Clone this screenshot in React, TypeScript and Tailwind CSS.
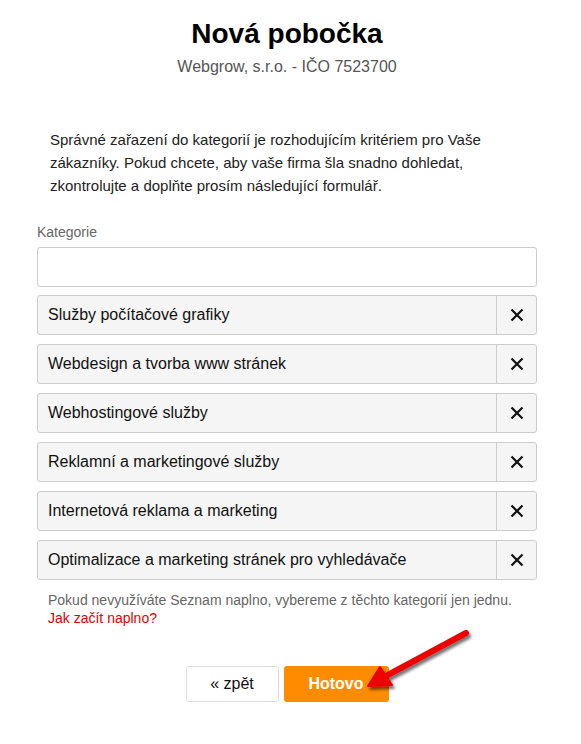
const categories = [
  "Služby počítačové grafiky",
  "Webdesign a tvorba www stránek",
  "Webhostingové služby",
  "Reklamní a marketingové služby",
  "Internetová reklama a marketing",
  "Optimalizace a marketing stránek pro vyhledávače",
];

function CloseIcon() {
  return (
    <svg width="14" height="14" viewBox="0 0 14 14" fill="none">
      <path d="M1.5 1.5 L12.5 12.5 M12.5 1.5 L1.5 12.5" stroke="#111" strokeWidth="2.2" />
    </svg>
  );
}

export default function App() {
  return (
    <div className="relative min-h-[744px] bg-white font-['Liberation_Sans',Arial,sans-serif] text-[#222]">
      <div className="ml-[37px] flex w-[500px] flex-col pt-[17px]">
        {/* Header */}
        <h1 className="text-center text-[28px] font-bold leading-[34px] text-black">Nová pobočka</h1>
        <p className="mt-[6px] text-center text-[16px] leading-[20px] text-[#555]">
          Webgrow, s.r.o. - IČO 7523700
        </p>

        {/* Intro */}
        <p className="mt-[51px] w-[470px] pl-[13px] pr-[10px] text-[15px] leading-[23px] text-[#222]">
          Správné zařazení do kategorií je rozhodujícím kritériem pro Vaše zákazníky. Pokud chcete,
          aby vaše firma šla snadno dohledat, zkontrolujte a doplňte prosím následující formulář.
        </p>

        {/* Category picker */}
        <label className="mt-[26px] text-[14px] leading-[18px] text-[#666]">Kategorie</label>
        <input className="mt-[6px] h-[40px] w-full rounded-[3px] border border-[#ccc] bg-white px-[10px] outline-none" />

        <div className="mt-[8px] flex flex-col gap-[9px]">
          {categories.map((c) => (
            <div
              key={c}
              className="flex h-[40px] items-stretch rounded-[3px] border border-[#ccc] bg-[#f5f5f5]"
            >
              <div className="flex flex-1 items-center px-[10px] text-[16px] text-[#111]">{c}</div>
              <button className="flex w-[40px] items-center justify-center border-l border-[#ccc]">
                <CloseIcon />
              </button>
            </div>
          ))}
        </div>

        <p className="mt-[11px] pl-[11px] text-[14px] leading-[18px] text-[#666]">
          Pokud nevyužíváte Seznam naplno, vybereme z těchto kategorií jen jednu.
          <br />
          <a className="text-[#e00000]">Jak začít naplno?</a>
        </p>

        {/* Actions */}
        <div className="mt-[39px] flex justify-center gap-[5px]">
          <button className="h-[36px] w-[93px] rounded-[3px] border border-[#ddd] bg-white text-[16px] text-[#111]">
            « zpět
          </button>
          <button className="h-[36px] w-[105px] rounded-[3px] bg-[#ff8c00] text-[16px] font-bold text-white">
            Hotovo
          </button>
        </div>
      </div>

      {/* Annotation arrow */}
      <svg className="pointer-events-none absolute left-0 top-0" width="581" height="744">
        <defs>
          <filter id="sh" x="-20%" y="-20%" width="140%" height="140%">
            <feDropShadow dx="2" dy="3" stdDeviation="1.6" floodColor="#000" floodOpacity="0.55" />
          </filter>
        </defs>
        <g filter="url(#sh)">
          <line x1="466" y1="633" x2="386" y2="676" stroke="#ee0000" strokeWidth="6" strokeLinecap="round" />
          <polygon points="368,686 380,667 392,685" fill="#ee0000" stroke="#ee0000" strokeWidth="2" strokeLinejoin="round" />
        </g>
      </svg>
    </div>
  );
}
